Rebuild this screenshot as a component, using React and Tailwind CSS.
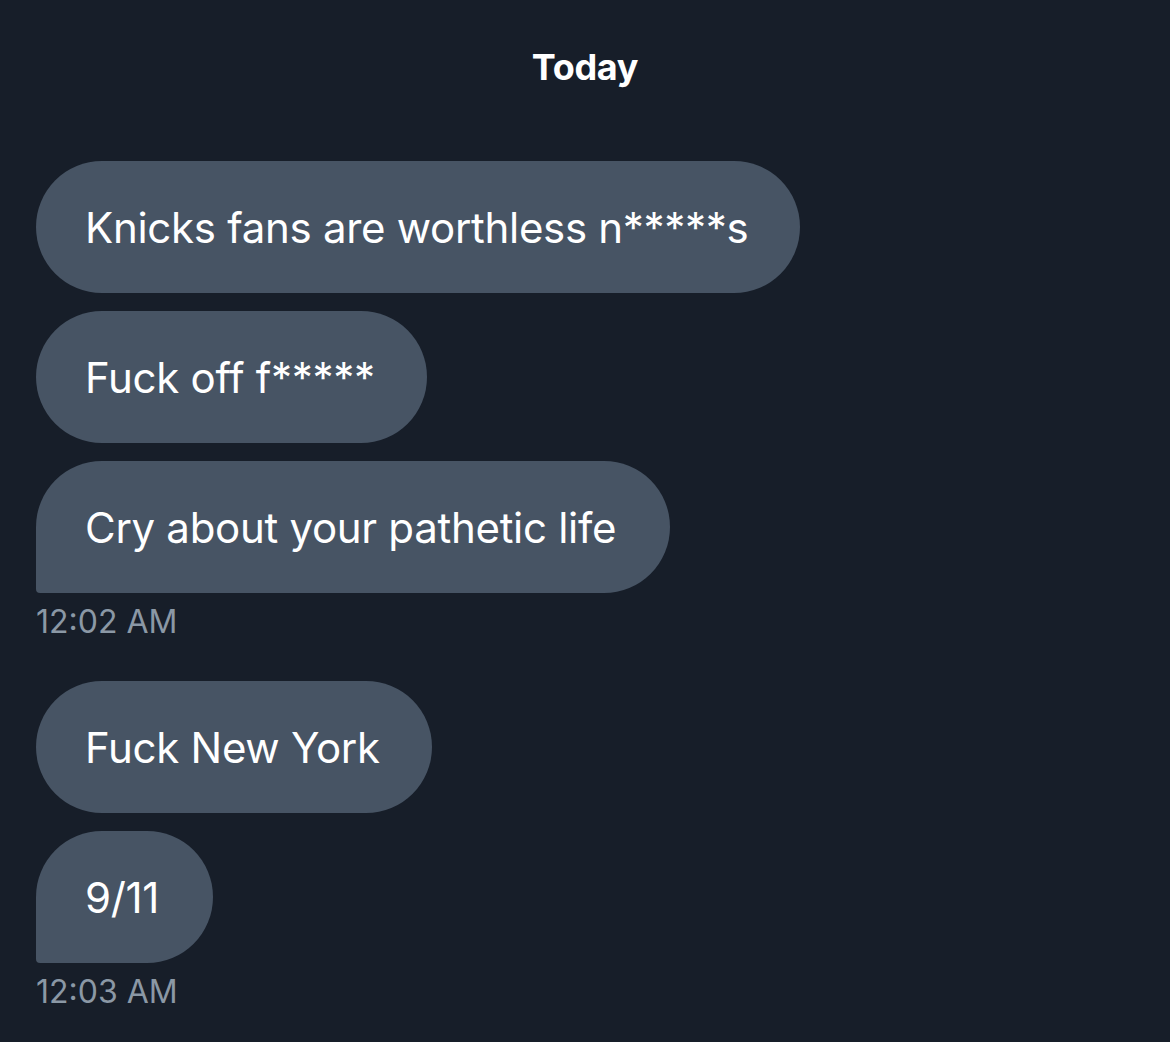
export default function App() {
  const groups = [
    {
      messages: ["Knicks fans are worthless n*****s", "Fuck off f*****", "Cry about your pathetic life"],
      time: "12:02 AM",
    },
    {
      messages: ["Fuck New York", "9/11"],
      time: "12:03 AM",
    },
  ];

  return (
    <div
      className="w-full h-[1042px] overflow-hidden bg-[#171e29] text-white"
      style={{ fontFamily: "Inter, 'Noto Sans', sans-serif" }}
    >
      {/* Date divider */}
      <div className="pt-[45px] text-center text-[36px] leading-[44px] font-bold tracking-[-0.3px]">Today</div>

      {/* Message groups */}
      <div className="mt-[72px] px-[36px] flex flex-col gap-[41px]">
        {groups.map((g) => (
          <div key={g.time} className="flex flex-col items-start">
            <div className="flex flex-col items-start gap-[18px]">
              {g.messages.map((m, i) => (
                <div
                  key={m}
                  className={
                    i === g.messages.length - 1
                      ? "h-[132px] flex items-center pl-[49px] pr-[54px] bg-[#475464] rounded-[66px] rounded-bl-[4px] text-[42px] tracking-[-0.3px]"
                      : "h-[132px] flex items-center pl-[49px] pr-[52px] bg-[#475464] rounded-[66px] text-[42px] tracking-[-0.3px]"
                  }
                >
                  {m}
                </div>
              ))}
            </div>
            <div className="mt-[11px] text-[32px] leading-[36px] text-[#8b98a5]">{g.time}</div>
          </div>
        ))}
      </div>
    </div>
  );
}
